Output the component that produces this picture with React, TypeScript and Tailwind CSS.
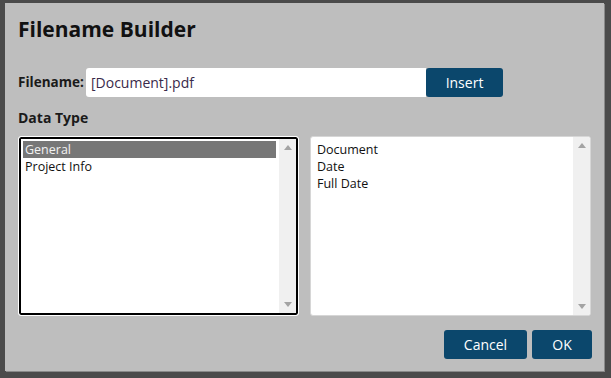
const font = { fontFamily: '"Open Sans", "Noto Sans", sans-serif' };

function ScrollTrack() {
  return (
    <div className="flex h-full w-[17px] shrink-0 flex-col items-center justify-between bg-[#f0f0f0] py-[6px]">
      <svg width="8" height="5" viewBox="0 0 8 5">
        <path d="M0 5 L4 0 L8 5 Z" fill="#a3a3a3" />
      </svg>
      <svg width="8" height="5" viewBox="0 0 8 5">
        <path d="M0 0 L4 5 L8 0 Z" fill="#a3a3a3" />
      </svg>
    </div>
  );
}

function ListBox({
  items,
  selected,
  focused,
}: {
  items: string[];
  selected?: string;
  focused?: boolean;
}) {
  return (
    <div
      className={`flex h-[180px] overflow-hidden rounded-[3px] bg-white ${
        focused
          ? "border border-white shadow-[inset_0_0_0_2px_#000] p-[2px]"
          : "border border-[#d6d6d6]"
      }`}
    >
      <ul className={`flex-1 ${focused ? "pl-[2px] pr-[3px] pt-[2px]" : "pl-[4px] pt-[4px]"}`}>
        {items.map((item) => (
          <li
            key={item}
            className={`h-[17px] px-[2px] text-[12.5px] leading-[17px] ${
              item === selected ? "bg-[#777777] text-[#f2f2f2]" : "text-[#111]"
            }`}
          >
            {item}
          </li>
        ))}
      </ul>
      <ScrollTrack />
    </div>
  );
}

export default function App() {
  return (
    <div className="h-[378px] w-[611px] bg-[#4b4b4b] pl-[5px] pt-[3px]" style={font}>
      <div className="flex h-[368px] w-[599px] flex-col bg-[#bebebe] px-[13px] shadow-[1px_1px_0_#8a8a8a]">
        <h1 className="mt-[12px] text-[21px] font-bold leading-[28px] text-[#111]">
          Filename Builder
        </h1>

        <div className="mt-[25px] flex h-[29px] items-center">
          <label className="w-[68px] text-[13.5px] font-bold text-[#1a1a1a]">Filename:</label>
          <div className="flex h-full w-[340px] items-center rounded-l-[3px] bg-white pl-[5px] text-[14px] text-[#3a2a4a]">
            [Document].pdf
          </div>
          <button className="h-full w-[77px] rounded-[3px] bg-[#0b476c] text-[14px] text-white">
            Insert
          </button>
        </div>

        <h2 className="mt-[11px] text-[14px] font-bold leading-[20px] text-[#1a1a1a]">
          Data Type
        </h2>

        <div className="mt-[8px] grid grid-cols-[281px_281px] gap-[11px]">
          <ListBox items={["General", "Project Info"]} selected="General" focused />
          <ListBox items={["Document", "Date", "Full Date"]} />
        </div>

        <div className="mr-[-1px] mt-[14px] flex justify-end gap-[5px]">
          <button className="h-[29px] w-[83px] rounded-[3px] bg-[#0b476c] text-[14px] text-white">
            Cancel
          </button>
          <button className="h-[29px] w-[60px] rounded-[3px] bg-[#0b476c] text-[14px] text-white">
            OK
          </button>
        </div>
      </div>
    </div>
  );
}
